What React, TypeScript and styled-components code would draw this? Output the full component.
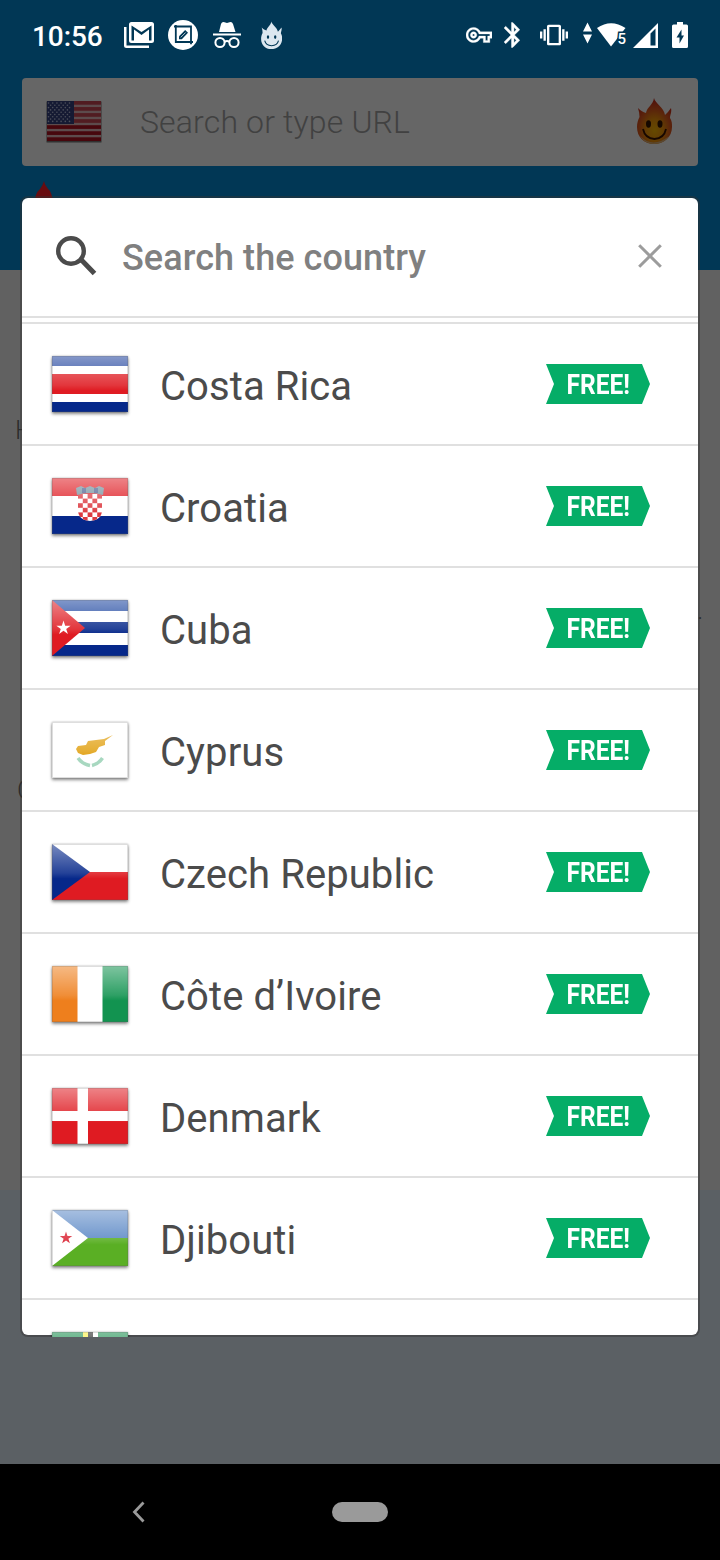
import React from "react";
import styled, { createGlobalStyle } from "styled-components";

const GlobalStyle = createGlobalStyle`
  * { box-sizing: border-box; }
  html, body { margin: 0; padding: 0; background: #000; }
  body { font-family: Roboto, "Liberation Sans", sans-serif; }
`;

const Screen = styled.div`
  position: relative;
  width: 720px;
  height: 1560px;
  display: flex;
  flex-direction: column;
  overflow: hidden;
  background: #5b6064;
`;

const Header = styled.header`
  height: 270px;
  flex: none;
  background: #013755;
`;

const StatusBar = styled.div`
  display: flex;
  justify-content: space-between;
  height: 78px;
  padding: 20px 32px 0 32px;
`;

const StatusGroup = styled.div`
  display: flex;
  height: 30px;
`;

const Clock = styled.span`
  width: 72px;
  font-size: 28px;
  line-height: 33px;
  font-weight: 500;
  letter-spacing: -0.1px;
  color: #fff;
  white-space: nowrap;
`;

const StatusIcon = styled.svg<{ $gap: number }>`
  display: block;
  flex: none;
  height: 30px;
  margin-left: ${(p) => p.$gap}px;
  fill: #fff;
`;

const UrlBar = styled.div`
  display: flex;
  align-items: center;
  height: 88px;
  margin: 0 22px;
  padding: 0 25px 2px 22px;
  border-radius: 4px;
  background: #666;
`;

const UrlHint = styled.span`
  flex: 1;
  margin-left: 36px;
  padding-top: 2px;
  font-size: 32px;
  line-height: 40px;
  font-weight: 300;
  letter-spacing: 0.15px;
  color: #414141;
`;

const Dimmed = styled.svg`
  display: block;
  flex: none;
  filter: brightness(0.41);
`;

const Spark = styled.svg`
  display: block;
  margin: 15px 0 0 34px;
`;

const Body = styled.main`
  height: 920px;
  flex: none;
  padding: 145px 0 0 15px;
  background: #616161;
`;

const BodyText = styled.div<{ $top?: number; $left?: number }>`
  margin-top: ${(p) => p.$top ?? 0}px;
  margin-left: ${(p) => p.$left ?? 0}px;
  font-size: 26px;
  line-height: 30px;
  font-weight: 300;
  color: #2c2c2c;
`;

const NavBar = styled.nav`
  display: flex;
  align-items: center;
  height: 96px;
  margin-top: auto;
  padding-left: 132px;
  background: #000;
`;

const HomePill = styled.div`
  width: 56px;
  height: 20px;
  margin-left: 186px;
  border-radius: 10px;
  background: #9a9a9a;
`;

const Dialog = styled.section`
  position: absolute;
  left: 22px;
  top: 198px;
  width: 676px;
  height: 1137px;
  display: flex;
  flex-direction: column;
  border-radius: 6px;
  background: #fff;
  box-shadow: 0 0 0 2px rgba(50, 50, 50, 0.45);
`;

const SearchRow = styled.div`
  display: flex;
  align-items: center;
  height: 120px;
  flex: none;
  padding: 0 36px 2px 34px;
  border-bottom: 2px solid #e0e0e0;
`;

const SearchHint = styled.span`
  flex: 1;
  margin-left: 25px;
  padding-top: 3px;
  font-size: 36px;
  line-height: 42px;
  font-weight: 500;
  letter-spacing: 0.07px;
  color: #808080;
`;

const List = styled.ul`
  flex: 1;
  margin: 4px 0 -2px;
  padding: 0;
  list-style: none;
  overflow: hidden;
  border-top: 2px solid #e0e0e0;
`;

const Row = styled.li`
  display: flex;
  align-items: center;
  height: 122px;
  padding: 0 48px 0 30px;
  border-bottom: 2px solid #e0e0e0;
`;

const FlagFrame = styled.div`
  position: relative;
  flex: none;
  width: 76px;
  height: 56px;
  background: #fff;
  box-shadow: 0 2px 3px rgba(0, 0, 0, 0.45), 0 0 2px rgba(0, 0, 0, 0.25);
  svg { display: block; }
  &::after {
    content: "";
    position: absolute;
    inset: 0;
    background: linear-gradient(rgba(255, 255, 255, 0.46), rgba(255, 255, 255, 0.12) 52%, rgba(255, 255, 255, 0) 62%);
    box-shadow: inset 0 0 0 1px rgba(90, 90, 90, 0.2);
  }
`;

const Country = styled.span`
  flex: 1;
  margin-left: 32px;
  padding-top: 6px;
  font-size: 40px;
  line-height: 48px;
  letter-spacing: 0.08px;
  color: #4b4b4b;
  white-space: nowrap;
`;

const Badge = styled.div`
  display: flex;
  justify-content: center;
  align-items: center;
  width: 104px;
  height: 40px;
  background: #05ad67;
  clip-path: polygon(0 0, 96px 0, 100% 50%, 96px 100%, 0 100%, 8px 50%);
`;

const BadgeText = styled.span`
  flex: none;
  padding-top: 2px;
  font-size: 28px;
  line-height: 38px;
  font-weight: 700;
  color: #fff;
  transform: scaleX(0.875);
`;

const STAR = "M0-1 .225-.31 .951-.31 .363.118 .588.809 0 .382-.588.809-.363.118-.951-.31-.225-.31Z";

const navy = "#06288a";
const red = "#df1b22";

const checks: React.ReactNode[] = [];
for (let r = 0; r < 6; r++) {
  for (let c = 0; c < 5; c++) {
    if ((r + c) % 2 === 0) {
      checks.push(<rect key={`${r}-${c}`} x={26 + c * 4.8} y={16 + r * 4.6} width="4.8" height="4.6" fill="#dc3a40" />);
    }
  }
}

const flags: Record<string, React.ReactNode> = {
  costaRica: (
    <>
      <rect width="76" height="56" fill="#fff" />
      <rect width="76" height="10" fill="#1e419c" />
      <rect y="18" width="76" height="20" fill={red} />
      <rect y="46" width="76" height="10" fill={navy} />
    </>
  ),
  croatia: (
    <>
      <rect width="76" height="56" fill="#fff" />
      <rect width="76" height="18" fill={red} />
      <rect y="38" width="76" height="18" fill={navy} />
      <clipPath id="shield"><path d="M26 16H50V32Q50 42 38 43 26 42 26 32Z" /></clipPath>
      <g clipPath="url(#shield)">
        <rect x="26" y="16" width="24" height="28" fill="#fff" />
        {checks}
      </g>
      <path d="M24 10l5-2 4 2 5-2 5 2 4-2 5 2-1 7q-13-4-26 0Z" fill="#728f9c" />
      <path d="M30 10h4v5h-4zM42 10h4v5h-4z" fill="#465b8c" />
    </>
  ),
  cuba: (
    <>
      <rect width="76" height="56" fill="#fff" />
      <rect width="76" height="11" fill="#16409d" />
      <rect y="22" width="76" height="11" fill={navy} />
      <rect y="45" width="76" height="11" fill={navy} />
      <path d="M0 0 33 28 0 56Z" fill={red} />
      <path d={STAR} transform="translate(11.5 28) scale(7.5)" fill="#fff" />
    </>
  ),
  cyprus: (
    <>
      <rect width="76" height="56" fill="#fff" />
      <path d="M24 27l2-3 8-1 2-4 8-1 8-1 9-4-8 6 0 4-6 2-3 5-6 2-7 1-5-2Z" fill="#e2a317" />
      <path d="M26 36q4 6 12 7.500M50.500 36q-4 6-10.500 7.500" fill="none" stroke="#a8d8c0" strokeWidth="3.500" />
    </>
  ),
  czech: (
    <>
      <rect width="76" height="28" fill="#fff" />
      <rect y="28" width="76" height="28" fill={red} />
      <path d="M0 0 38 28 0 56Z" fill={navy} />
    </>
  ),
  ivory: (
    <>
      <rect width="76" height="56" fill="#fff" />
      <rect width="25.5" height="56" fill="#ee7f1d" />
      <rect x="50.5" width="25.5" height="56" fill="#129350" />
    </>
  ),
  denmark: (
    <>
      <rect width="76" height="56" fill={red} />
      <rect x="25.5" width="10.5" height="56" fill="#fff" />
      <rect y="23" width="76" height="10" fill="#fff" />
    </>
  ),
  djibouti: (
    <>
      <rect width="76" height="28" fill="#5c89c6" />
      <rect y="28" width="76" height="28" fill="#5aaf24" />
      <path d="M0 0 36 28 0 56Z" fill="#fff" />
      <path d={STAR} transform="translate(14 28) scale(6.6)" fill="#db2938" />
    </>
  ),
  dominica: (
    <>
      <rect width="76" height="56" fill="#128a48" />
      <rect x="31" width="5" height="56" fill="#fbef35" />
      <rect x="36" width="5" height="56" fill="#161616" />
      <rect x="41" width="5" height="56" fill="#fff" />
    </>
  ),
};

const countries = [
  ["costaRica", "Costa Rica"],
  ["croatia", "Croatia"],
  ["cuba", "Cuba"],
  ["cyprus", "Cyprus"],
  ["czech", "Czech Republic"],
  ["ivory", "Côte d’Ivoire"],
  ["denmark", "Denmark"],
  ["djibouti", "Djibouti"],
];

function Flag({ name }: { name: string }) {
  return (
    <FlagFrame>
      <svg width="76" height="56" viewBox="0 0 76 56">{flags[name]}</svg>
    </FlagFrame>
  );
}

function UsFlag() {
  const stars: React.ReactNode[] = [];
  for (let r = 0; r < 9; r++) {
    for (let c = 0; c < (r % 2 ? 5 : 6); c++) {
      stars.push(<circle key={`${r}-${c}`} cx={4.5 + c * 4.2 + (r % 2 ? 2.1 : 0)} cy={4 + r * 2.3} r="0.8" />);
    }
  }
  return (
    <Dimmed width="60" height="44" viewBox="0 0 60 44">
      <rect x="2.5" y="2.5" width="55" height="41" fill="#777" />
      <rect x="3" y="2" width="54" height="40" fill="#e0b6ba" />
      {[0, 1, 2, 3, 4, 5, 6].map((i) => (
        <rect key={i} x="3" y={2 + i * 6.05} width="54" height="3.7" fill={i < 4 ? "#c64450" : "#ae1020"} />
      ))}
      <rect x="3" y="2" width="27" height="23" fill="#34407d" />
      <g fill="#b9c0dc">{stars}</g>
    </Dimmed>
  );
}

const FLAME = "M18 0C19 5 28 10 29 17C31 15 33 13 35 10C36 14 34 17 34 20C36 23 36 26 36 29C36 39 28 46 18 46C8 46 1 39 1 29C1 25 2 22 3.500 19C3.500 16 3 13 2 10C5 13 7 14 10 15C11 9 17 7 18 0Z";

function FlameFace() {
  return (
    <Dimmed width="37" height="47" viewBox="0 0 37 47">
      <defs>
        <radialGradient id="flame" cx="50%" cy="70%" r="68%">
          <stop offset="0" stopColor="#f8b400" />
          <stop offset="0.35" stopColor="#ee9208" />
          <stop offset="0.65" stopColor="#dc5a1a" />
          <stop offset="1" stopColor="#c32518" />
        </radialGradient>
      </defs>
      <path d={FLAME} fill="url(#flame)" />
      <path d="M4 38Q17 51 33 38Q28 46 18 46Q9 46 4 38Z" fill="#d9b078" />
      <ellipse cx="12.5" cy="26" rx="2.5" ry="3.7" fill="#331400" />
      <ellipse cx="24" cy="26" rx="2.5" ry="3.7" fill="#331400" />
      <path d="M7 31Q9 40.5 18.5 41 28 40.5 30 31" fill="none" stroke="#381200" strokeWidth="1.8" />
    </Dimmed>
  );
}

function LeftStatus() {
  return (
    <StatusGroup>
      <Clock>10:56</Clock>
      <StatusIcon $gap={20} width="30" viewBox="124 20 30 30">
        <path d="M124 27v18.500q0 2.500 2.500 2.500H149v-2.500H126.500V27Z" />
        <path fillRule="evenodd" d="M131.500 22H151.500Q154 22 154 24.500V40.500Q154 43 151.500 43H131.500Q129 43 129 40.500V24.500Q129 22 131.500 22ZM131.500 25.500V40.500H134V29.500L141.500 35 149 29.500V40.500H151.500V25.500L141.500 32Z" />
      </StatusIcon>
      <StatusIcon $gap={14} width="30" viewBox="168 20 30 30">
        <circle cx="183" cy="35" r="15" />
        <path d="M174 26.500H191V44.300M175.800 25V42H193" fill="none" stroke="#013755" strokeWidth="1.800" />
        <path d="M179 39.200v-3l6.200-6.200 2.800 2.800-6.200 6.400Z" fill="#013755" />
        <path d="M180.800 37.300l4.800-4.800" stroke="#fff" strokeWidth=".7" />
      </StatusIcon>
      <StatusIcon $gap={15} width="28" viewBox="213 20 28 30">
        <path d="M219 32 221 24Q222 21.500 224.500 22.300L227 23l2.500-.7Q232 21.500 233 24l2.500 8Z" />
        <rect x="213" y="33.500" width="28" height="2" />
        <g fill="none" stroke="#fff" strokeWidth="2">
          <circle cx="220" cy="42.500" r="4.600" />
          <circle cx="234" cy="42.500" r="4.600" />
          <path d="M224.500 42Q227 40 229.500 42" />
        </g>
      </StatusIcon>
      <StatusIcon $gap={20} width="21" viewBox="261 20 21 30">
        <g transform="translate(260.500 21.500) scale(.6)">
          <path d={FLAME} fill="#dce7f0" />
          <ellipse cx="12.500" cy="26" rx="2" ry="3" fill="#013755" />
          <ellipse cx="24.500" cy="26" rx="2" ry="3" fill="#013755" />
          <path d="M7 32Q9 40 18.500 40.500 28 40 30 32" fill="none" stroke="#013755" strokeWidth="1.800" />
        </g>
      </StatusIcon>
    </StatusGroup>
  );
}

const WifiDigit = styled.text`
  font: 500 15px Roboto, sans-serif;
  stroke: #013755;
  stroke-width: 3px;
  paint-order: stroke;
`;

function RightStatus() {
  return (
    <StatusGroup>
      <StatusIcon $gap={0} width="26" viewBox="466 20 26 30">
        <path transform="translate(466 22) scale(1.083)" stroke="#fff" strokeWidth=".3" d="M22 19h-6v-4h-2.680c-1.140 2.420-3.600 4-6.320 4-3.860 0-7-3.140-7-7s3.140-7 7-7c2.720 0 5.170 1.580 6.320 4H24v6h-2v4zm-4-2h2v-4h2v-2H11.940l-.23-.67C11.010 8.340 9.110 7 7 7c-2.760 0-5 2.240-5 5s2.240 5 5 5c2.110 0 4.010-1.340 4.710-3.330l.23-.67H18v4zM7 15c-1.650 0-3-1.350-3-3s1.350-3 3-3 3 1.350 3 3-1.350 3-3 3zm0-4c-.55 0-1 .45-1 1s.45 1 1 1 1-.45 1-1-.45-1-1-1z" />
      </StatusIcon>
      <StatusIcon $gap={12} width="16" viewBox="504 20 16 30">
        <path transform="translate(497.700 20) scale(1.250)" stroke="#fff" strokeWidth=".3" d="M17.710 7.710L12 2h-1v7.590L6.410 5 5 6.410 10.590 12 5 17.590 6.410 19 11 14.410V22h1l5.710-5.710-4.300-4.290 4.300-4.290zM13 5.830l1.880 1.880L13 9.590V5.830zm1.880 10.460L13 18.170v-3.760l1.880 1.880z" />
      </StatusIcon>
      <StatusIcon $gap={20} width="28" viewBox="540 20 28 30">
        <path transform="translate(540 21.200) scale(1.167 1.150)" d="M0 15h2V9H0v6zm3 2h2V7H3v10zm19-8v6h2V9h-2zm-3 8h2V7h-2v10zM16.500 3h-9C6.670 3 6 3.670 6 4.500v15c0 .83.67 1.500 1.500 1.500h9c.83 0 1.500-.67 1.500-1.500v-15c0-.83-.67-1.500-1.500-1.500zM16 19H8V5h8v14z" />
      </StatusIcon>
      <StatusIcon $gap={15} width="9" viewBox="583 20 9 30">
        <path d="M583 31.500 587.500 22.500 592 31.500ZM583 34.500 587.500 43.500 592 34.500Z" />
      </StatusIcon>
      <StatusIcon $gap={5} width="30" viewBox="597 20 30 30">
        <path d="M597 28Q611 18.500 625.500 28L611 46.500Z" />
        <WifiDigit x="617.500" y="44">5</WifiDigit>
      </StatusIcon>
      <StatusIcon $gap={6} width="25" viewBox="633 20 25 30">
        <path fillRule="evenodd" d="M633 48 658 23V48ZM650.500 33.500V45.500H655.500V28.500Z" />
      </StatusIcon>
      <StatusIcon $gap={14} width="16" viewBox="672 20 16 30">
        <path fillRule="evenodd" d="M677 22h6v2.500h3.500q1.500 0 1.500 1.500V46.500q0 1.500-1.500 1.500H673.500q-1.500 0-1.500-1.500V26q0-1.500 1.500-1.500H677ZM681.500 29.500 676.500 37.500h3V43.500L684 35.500H681.500Z" />
      </StatusIcon>
    </StatusGroup>
  );
}

export default function App() {
  return (
    <>
      <GlobalStyle />
      <Screen>
        <Header>
          <StatusBar>
            <LeftStatus />
            <RightStatus />
          </StatusBar>
          <UrlBar>
            <UsFlag />
            <UrlHint>Search or type URL</UrlHint>
            <FlameFace />
          </UrlBar>
          <Spark width="20" height="24" viewBox="0 0 20 24">
            <path d="M10 0Q11 5 16 10Q19 16 19 24H0Q1 12 6 8Q9 4 10 0Z" fill="#680c10" />
          </Spark>
        </Header>
        <Body>
          <BodyText>H</BodyText>
          <BodyText $top={150} $left={682}>.</BodyText>
          <BodyText $top={150} $left={2}>C</BodyText>
        </Body>
        <NavBar>
          <svg width="14" height="22" viewBox="0 0 14 22">
            <path d="M11.500 1.500 2.500 11 11.500 20.500" fill="none" stroke="#9a9a9a" strokeWidth="2.800" />
          </svg>
          <HomePill />
        </NavBar>
        <Dialog>
          <SearchRow>
            <svg width="41" height="41" viewBox="0 0 41 41">
              <circle cx="15" cy="15" r="12.800" fill="none" stroke="#4b4b4b" strokeWidth="4.400" />
              <path d="M24 24 26.500 25 38.500 37.500" fill="none" stroke="#4b4b4b" strokeWidth="5" />
            </svg>
            <SearchHint>Search the country</SearchHint>
            <svg width="24" height="24" viewBox="0 0 24 24">
              <path d="M1.200 1.200 22.800 22.800M22.800 1.200 1.200 22.800" stroke="#9c9c9c" strokeWidth="3" />
            </svg>
          </SearchRow>
          <List>
            {countries.map(([flag, name]) => (
              <Row key={name}>
                <Flag name={flag} />
                <Country>{name}</Country>
                <Badge><BadgeText>FREE!</BadgeText></Badge>
              </Row>
            ))}
            <Row>
              <Flag name="dominica" />
            </Row>
          </List>
        </Dialog>
      </Screen>
    </>
  );
}
